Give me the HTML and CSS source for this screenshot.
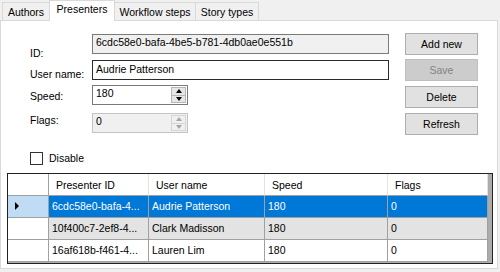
FILE: index.html
```html
<!DOCTYPE html>
<html>
<head>
<meta charset="utf-8">
<title>Presenters</title>
<link rel="stylesheet" href="styles.css">
</head>
<body>
<div class="tabs">
  <div class="tab t-authors">Authors</div>
  <div class="tab t-presenters active">Presenters</div>
  <div class="tab t-workflow">Workflow steps</div>
  <div class="tab t-story">Story types</div>
</div>
<div class="page">
  <div class="top">
    <div class="labels">
      <div class="lbl l-id">ID:</div>
      <div class="lbl l-user">User name:</div>
      <div class="lbl l-speed">Speed:</div>
      <div class="lbl l-flags">Flags:</div>
    </div>
    <div class="fields">
      <div class="field ro f-id">6cdc58e0-bafa-4be5-b781-4db0ae0e551b</div>
      <div class="field focus f-user">Audrie Patterson</div>
      <div class="num f-speed">
        <span class="val">180</span>
        <span class="spin"><span class="sb up"><i></i></span><span class="sb down"><i></i></span></span>
      </div>
      <div class="num dis f-flags">
        <span class="val">0</span>
        <span class="spin"><span class="sb up"><i></i></span><span class="sb down"><i></i></span></span>
      </div>
    </div>
    <div class="buttons">
      <div class="btn b-add">Add new</div>
      <div class="btn disabled b-save">Save</div>
      <div class="btn b-del">Delete</div>
      <div class="btn b-ref">Refresh</div>
    </div>
  </div>
  <div class="check"><span class="box"></span><span class="ctext">Disable</span></div>
  <div class="grid">
    <div class="row head">
      <div class="c rh"></div>
      <div class="c">Presenter ID</div>
      <div class="c">User name</div>
      <div class="c">Speed</div>
      <div class="c">Flags</div>
    </div>
    <div class="row sel">
      <div class="c rh"><span class="arrow"></span></div>
      <div class="c">6cdc58e0-bafa-4...</div>
      <div class="c">Audrie Patterson</div>
      <div class="c">180</div>
      <div class="c">0</div>
    </div>
    <div class="row alt">
      <div class="c rh"></div>
      <div class="c">10f400c7-2ef8-4...</div>
      <div class="c">Clark Madisson</div>
      <div class="c">180</div>
      <div class="c">0</div>
    </div>
    <div class="row">
      <div class="c rh"></div>
      <div class="c">16af618b-f461-4...</div>
      <div class="c">Lauren Lim</div>
      <div class="c">180</div>
      <div class="c">0</div>
    </div>
  </div>
</div>
</body>
</html>
```

FILE: styles.css
```css
* { box-sizing: border-box; }
html, body { margin: 0; padding: 0; }
body {
  background: #f0f0f0;
  font-family: "Liberation Sans", Arial, sans-serif;
  font-size: 10.5px;
  line-height: 13px;
  color: #000;
  width: 500px;
  height: 272px;
  overflow: hidden;
}

/* tabs */
.tabs {
  display: flex;
  align-items: flex-end;
  height: 20px;
  padding-left: 2px;
  position: relative;
  z-index: 2;
}
.tab {
  height: 18px;
  border: 1px solid #d9d9d9;
  border-bottom: none;
  background: #f0f0f0;
  text-align: center;
  padding-top: 3px;
  margin-right: -1px;
}
.t-authors { width: 48px; }
.t-presenters { width: 66px; }
.t-workflow { width: 82px; }
.t-story { width: 64px; }
.tab.active {
  height: 21px;
  margin-bottom: -1px;
  background: #fff;
  padding-top: 2px;
  position: relative;
  z-index: 3;
}

/* page */
.page {
  width: 498px;
  height: 249px;
  border: 1px solid #d9d9d9;
  background: #fff;
  position: relative;
  z-index: 1;
}
.top {
  display: flex;
  padding: 12px 0 0 29px;
}
.labels { width: 62px; display: flex; flex-direction: column; }
.lbl { height: 13px; }
.l-id { margin-top: 14px; }
.l-user { margin-top: 8px; }
.l-speed { margin-top: 9px; }
.l-flags { margin-top: 11px; }

.fields { width: 297px; display: flex; flex-direction: column; }
.field {
  height: 20px;
  border: 1px solid #7a7a7a;
  padding: 0 3px;
  line-height: 13px;
  padding-top: 1px;
  white-space: nowrap;
  overflow: hidden;
}
.field.ro { background: #f0f0f0; }
.field.focus { border-color: #2b2b2b; padding-top: 2px; }
.f-id { margin-top: 1px; }
.f-user { margin-top: 6px; }
.f-speed { margin-top: 5px; }
.f-flags { margin-top: 8px; }

.num {
  width: 96px;
  height: 20px;
  border: 1px solid #7a7a7a;
  display: flex;
  background: #fff;
}
.num .val { flex: 1; padding: 1px 0 0 3px; }
.num.dis { border-color: #c4c4c4; background: #f0f0f0; }
.spin {
  width: 16px;
  display: flex;
  flex-direction: column;
  padding: 1px 1px 1px 0;
}
.sb {
  flex: 1;
  background: #e6e6e6;
  border: 1px solid #b6b6b6;
  display: flex;
  align-items: center;
  justify-content: center;
}
.sb.down { border-top: none; }
.sb i {
  width: 0; height: 0;
  border-left: 3.5px solid transparent;
  border-right: 3.5px solid transparent;
}
.up i { border-bottom: 4px solid #000; }
.down i { border-top: 4px solid #000; }
.dis .sb { background: #f0f0f0; border-color: #d5d5d5; }
.dis .up i { border-bottom-color: #a6a6a6; }
.dis .down i { border-top-color: #a6a6a6; }

.buttons { margin-left: 16px; width: 73px; display: flex; flex-direction: column; }
.btn {
  height: 22px;
  background: #e1e1e1;
  border: 1px solid #adadad;
  text-align: center;
  line-height: 20px;
}
.btn.disabled { background: #cccccc; border-color: #bfbfbf; color: #838383; }
.b-save { margin-top: 4px; }
.b-del { margin-top: 5px; }
.b-ref { margin-top: 5px; }

/* checkbox */
.check {
  display: flex;
  align-items: flex-start;
  margin: 15px 0 0 29px;
  height: 15px;
}
.box {
  width: 13px;
  height: 13px;
  border: 1px solid #333;
  background: #fff;
  margin-top: 2px;
}
.ctext { margin-left: 6px; padding-top: 2px; }

/* data grid */
.grid {
  margin: 8px 0 0 6px;
  width: 486px;
  height: 91px;
  border: 1px solid #222;
  background: #ababab;
}
.row {
  display: grid;
  grid-template-columns: 41px 100px 116px 123px 100px;
  height: 22px;
}
.c {
  border-right: 1px solid #a0a0a0;
  border-bottom: 1px solid #a0a0a0;
  background: #fff;
  line-height: 21px;
  padding-left: 3px;
  white-space: nowrap;
  overflow: hidden;
}
.head .c { padding-left: 7px; padding-top: 1px; line-height: 20px; border-right-color: #e3e3e3; }
.head .c.rh { border-right-color: #a0a0a0; }
.sel .c { background: #0078d7; color: #fff; }
.sel .c.rh { background: #bfdcf4; position: relative; }
.alt .c { background: #e3e3e3; }
.alt .c.rh { background: #fff; }
.arrow {
  position: absolute;
  left: 7px;
  top: 6px;
  width: 0; height: 0;
  border-left: 4px solid #000;
  border-top: 4px solid transparent;
  border-bottom: 4px solid transparent;
}
```
